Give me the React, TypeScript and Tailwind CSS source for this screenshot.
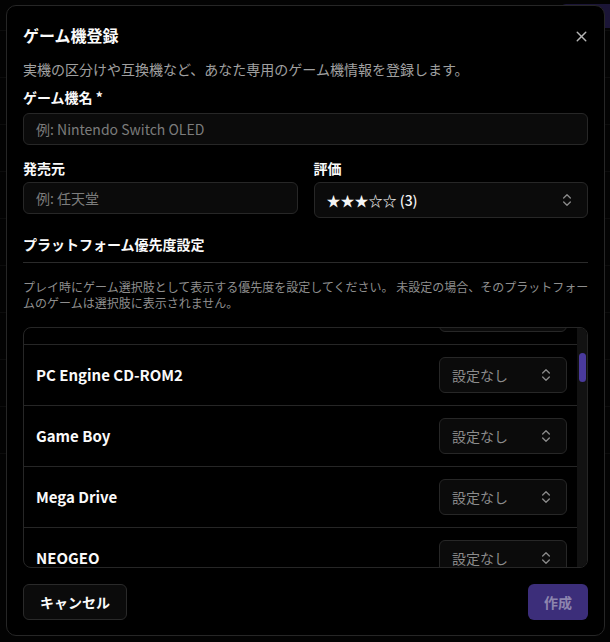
import React from "react";
import { X, ChevronsUpDown } from "lucide-react";

const platforms = [
  "Famicom",
  "Super Famicom",
  "PC Engine",
  "PC Engine CD-ROM2",
  "Game Boy",
  "Mega Drive",
  "NEOGEO",
  "PlayStation",
  "Sega Saturn",
];

function SelectBox({ text, muted, className }: { text: string; muted?: boolean; className: string }) {
  return (
    <div
      className={`flex items-center justify-between rounded-md border border-[#272727] bg-[#0b0b0b] px-3 text-sm ${
        muted ? "text-[#8c8c8c]" : "text-[#f5f5f5]"
      } ${className}`}
    >
      <span>{text}</span>
      <ChevronsUpDown size={16} strokeWidth={2} className="text-[#8a8a8a]" />
    </div>
  );
}

export default function App() {
  const backdropRows = Array.from({ length: 9 });
  return (
    <div className="relative h-[642px] w-[610px] overflow-hidden bg-[#0a0a0a] font-['Noto_Sans_CJK_JP','Noto_Sans',sans-serif]">
      {/* backdrop page */}
      <div className="flex flex-col">
        <div className="flex h-[31px] items-start justify-end border-b border-[#2a2a2a]">
          <div className="mr-[-10px] mt-[4px] h-[24px] w-[60px] rounded-md bg-[#5a48b8]" />
        </div>
        {backdropRows.map((_, i) => (
          <div key={i} className="h-[47px] border-b border-[#2a2a2a]" />
        ))}
      </div>
      <div className="absolute inset-0 bg-black/70" />

      {/* dialog */}
      <div className="absolute left-[6px] top-[5px] flex w-[599px] flex-col rounded-[10px] border border-[#262626] bg-black px-4 pb-[15px] pt-[17px]">
        <button className="absolute right-[14px] top-[22px] text-[#b5b5b5]">
          <X size={17} strokeWidth={2} />
        </button>

        <h2 className="text-base font-bold leading-6 text-[#fafafa]">ゲーム機登録</h2>
        <p className="mt-3 text-sm leading-5 text-[#a0a0a0]">
          実機の区分けや互換機など、あなた専用のゲーム機情報を登録します。
        </p>

        <label className="mt-2 text-sm font-bold leading-5 text-[#fafafa]">ゲーム機名 *</label>
        <div className="mt-[6px] flex h-8 items-center rounded-md border border-[#272727] bg-[#0b0b0b] px-3 text-sm text-[#7c7c7c]">
          例: Nintendo Switch OLED
        </div>

        <div className="mt-[13px] grid grid-cols-2 gap-x-4">
          <div className="flex flex-col">
            <label className="text-sm font-bold leading-5 text-[#fafafa]">発売元</label>
            <div className="mt-1 flex h-8 items-center rounded-md border border-[#272727] bg-[#0b0b0b] px-3 text-sm text-[#7c7c7c]">
              例: 任天堂
            </div>
          </div>
          <div className="flex flex-col">
            <label className="text-sm font-bold leading-5 text-[#fafafa]">評価</label>
            <SelectBox text="★★★☆☆ (3)" className="mt-1 h-9 font-medium" />
          </div>
        </div>

        <h3 className="mt-4 border-b border-[#2a2a2a] pb-2 text-sm font-bold leading-5 text-[#fafafa]">
          プラットフォーム優先度設定
        </h3>
        <p className="mt-4 text-xs leading-4 text-[#8e8e8e]">
          <span className="block whitespace-nowrap">
            プレイ時にゲーム選択肢として表示する優先度を設定してください。 未設定の場合、そのプラットフォー
          </span>
          <span className="block whitespace-nowrap">ムのゲームは選択肢に表示されません。</span>
        </p>

        <div className="mt-4 flex h-[241px] overflow-hidden rounded-lg border border-[#262626]">
          <div className="flex-1 overflow-hidden">
            <div className="-mt-[166px] flex flex-col">
              {platforms.map((p) => (
                <div
                  key={p}
                  className="flex h-[61px] shrink-0 items-center justify-between border-b border-[#262626] pl-3 pr-[10px]"
                >
                  <span className="text-[15px] font-semibold text-[#fafafa]">{p}</span>
                  <SelectBox text="設定なし" muted className="h-9 w-[128px]" />
                </div>
              ))}
            </div>
          </div>
          <div className="w-[10px] bg-[#121212]">
            <div className="ml-[2px] mt-[25px] h-[29px] w-[7px] rounded-full bg-[#4a3a9c]" />
          </div>
        </div>

        <div className="mt-4 flex items-center justify-between">
          <button className="flex h-9 items-center rounded-md border border-[#2a2a2a] bg-[#0b0b0b] px-4 text-sm font-bold text-[#fafafa]">
            キャンセル
          </button>
          <button className="flex h-9 items-center rounded-md bg-[#3c2e7a] px-4 text-sm font-bold text-[#8d85ae]">
            作成
          </button>
        </div>
      </div>
    </div>
  );
}
